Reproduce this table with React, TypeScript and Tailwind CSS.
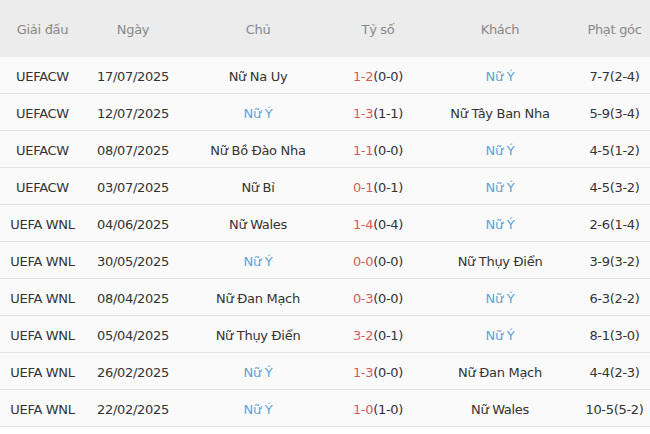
const rows = [
  { league: "UEFACW", date: "17/07/2025", home: "Nữ Na Uy", score: "1-2", half: "(0-0)", away: "Nữ Ý", corner: "7-7(2-4)", italyHome: false },
  { league: "UEFACW", date: "12/07/2025", home: "Nữ Ý", score: "1-3", half: "(1-1)", away: "Nữ Tây Ban Nha", corner: "5-9(3-4)", italyHome: true },
  { league: "UEFACW", date: "08/07/2025", home: "Nữ Bồ Đào Nha", score: "1-1", half: "(0-0)", away: "Nữ Ý", corner: "4-5(1-2)", italyHome: false },
  { league: "UEFACW", date: "03/07/2025", home: "Nữ Bỉ", score: "0-1", half: "(0-1)", away: "Nữ Ý", corner: "4-5(3-2)", italyHome: false },
  { league: "UEFA WNL", date: "04/06/2025", home: "Nữ Wales", score: "1-4", half: "(0-4)", away: "Nữ Ý", corner: "2-6(1-4)", italyHome: false },
  { league: "UEFA WNL", date: "30/05/2025", home: "Nữ Ý", score: "0-0", half: "(0-0)", away: "Nữ Thụy Điển", corner: "3-9(3-2)", italyHome: true },
  { league: "UEFA WNL", date: "08/04/2025", home: "Nữ Đan Mạch", score: "0-3", half: "(0-0)", away: "Nữ Ý", corner: "6-3(2-2)", italyHome: false },
  { league: "UEFA WNL", date: "05/04/2025", home: "Nữ Thụy Điển", score: "3-2", half: "(0-1)", away: "Nữ Ý", corner: "8-1(3-0)", italyHome: false },
  { league: "UEFA WNL", date: "26/02/2025", home: "Nữ Ý", score: "1-3", half: "(0-0)", away: "Nữ Đan Mạch", corner: "4-4(2-3)", italyHome: true },
  { league: "UEFA WNL", date: "22/02/2025", home: "Nữ Ý", score: "1-0", half: "(1-0)", away: "Nữ Wales", corner: "10-5(5-2)", italyHome: true },
];

const cols = "grid grid-cols-[85px_96px_154px_86px_158px_71px]";

export default function App() {
  return (
    <div className="h-[434px] w-[650px] overflow-hidden bg-white font-['DejaVu_Sans',sans-serif] text-[13px] tracking-[-0.3px] text-[#333]">
      <div className={`${cols} h-[57px] items-center bg-[#ececec] pt-[2px] text-center text-[#888]`}>
        <div>Giải đấu</div>
        <div>Ngày</div>
        <div>Chủ</div>
        <div>Tỷ số</div>
        <div>Khách</div>
        <div>Phạt góc</div>
      </div>
      {rows.map((r) => (
        <div
          key={r.date}
          className={`${cols} h-[37px] items-center border-b border-[#e3e3e3] bg-[#fafafa] pt-[3px] text-center`}
        >
          <div>{r.league}</div>
          <div>{r.date}</div>
          <div className={r.italyHome ? "text-[#5ba3d6]" : ""}>{r.home}</div>
          <div>
            <span className="text-[#d65c5c]">{r.score}</span>
            {r.half}
          </div>
          <div className={r.italyHome ? "" : "text-[#5ba3d6]"}>{r.away}</div>
          <div className="whitespace-nowrap">{r.corner}</div>
        </div>
      ))}
    </div>
  );
}
